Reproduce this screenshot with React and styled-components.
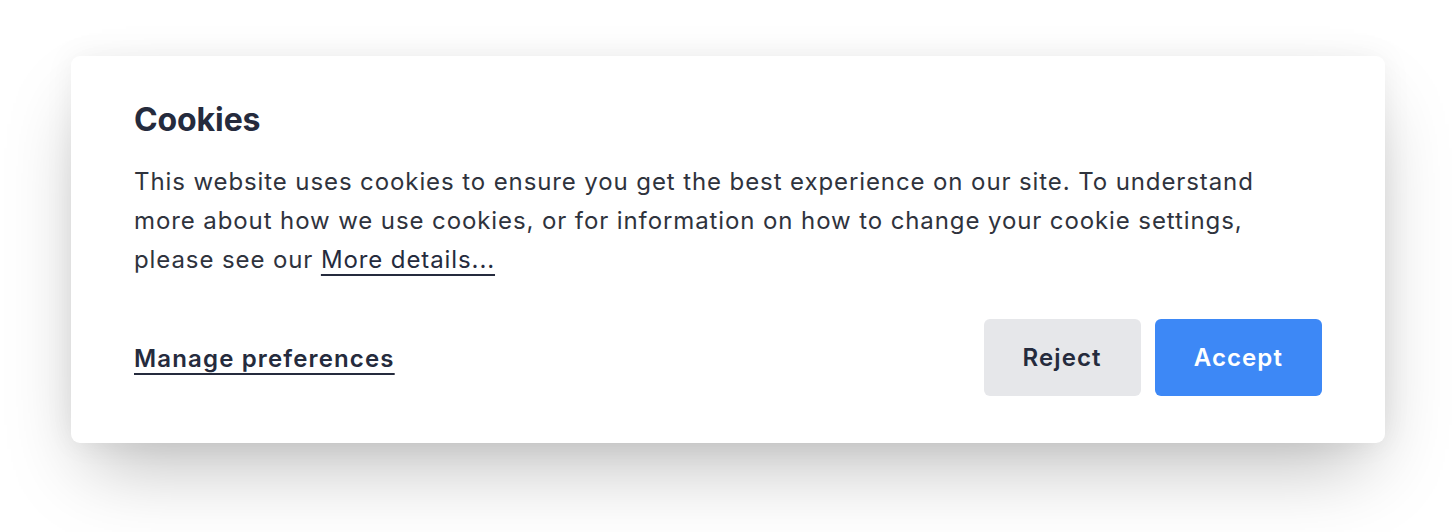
import React from "react";
import styled, { createGlobalStyle } from "styled-components";

const Global = createGlobalStyle`
  html, body { margin: 0; padding: 0; background: #ffffff; }
  body { font-family: Inter, "Noto Sans", sans-serif; -webkit-font-smoothing: antialiased; }
`;

const Page = styled.div`
  padding: 56px 71px 89px;
  background: #ffffff;
`;

const Card = styled.section`
  background: #ffffff;
  border-radius: 9px;
  padding: 45px 63px 47px;
  box-shadow: 0 37px 75px -18px rgba(0, 0, 0, 0.28), 0 0 30px rgba(0, 0, 0, 0.06);
`;

const Title = styled.h2`
  margin: 0;
  font-size: 32px;
  line-height: 38px;
  font-weight: 700;
  color: #252b3d;
  letter-spacing: -0.1px;
`;

const Text = styled.p`
  margin: 23px 0 0;
  max-width: 1160px;
  font-size: 24px;
  line-height: 39px;
  font-weight: 400;
  letter-spacing: 0.9px;
  color: #2f333d;
`;

const InlineLink = styled.a`
  color: #252b3d;
  text-decoration: underline;
  text-decoration-thickness: 2px;
  text-underline-offset: 6px;
  cursor: pointer;
`;

const Footer = styled.div`
  margin-top: 40px;
  display: flex;
  align-items: center;
  justify-content: space-between;
`;

const PrefLink = styled.a`
  font-size: 24px;
  font-weight: 600;
  letter-spacing: 1.15px;
  color: #252b3d;
  text-decoration: underline;
  text-decoration-thickness: 2px;
  text-underline-offset: 6px;
  cursor: pointer;
  transform: translateY(1px);
`;

const Actions = styled.div`
  display: flex;
  gap: 14px;
`;

const Button = styled.button`
  height: 77px;
  padding: 0 39px;
  border: none;
  border-radius: 6px;
  font-family: inherit;
  font-size: 24px;
  font-weight: 600;
  letter-spacing: 1.1px;
  cursor: pointer;
  background: ${(p) => (p.$primary ? "#3d88f6" : "#e6e7ea")};
  color: ${(p) => (p.$primary ? "#ffffff" : "#252b3d")};
`;

export default function App() {
  return (
    <>
      <Global />
      <Page>
        <Card>
          <Title>Cookies</Title>
          <Text>
            This website uses cookies to ensure you get the best experience on our site. To understand
            more about how we use cookies, or for information on how to change your cookie settings,
            please see our <InlineLink>More details...</InlineLink>
          </Text>
          <Footer>
            <PrefLink>Manage preferences</PrefLink>
            <Actions>
              <Button>Reject</Button>
              <Button $primary>Accept</Button>
            </Actions>
          </Footer>
        </Card>
      </Page>
    </>
  );
}
